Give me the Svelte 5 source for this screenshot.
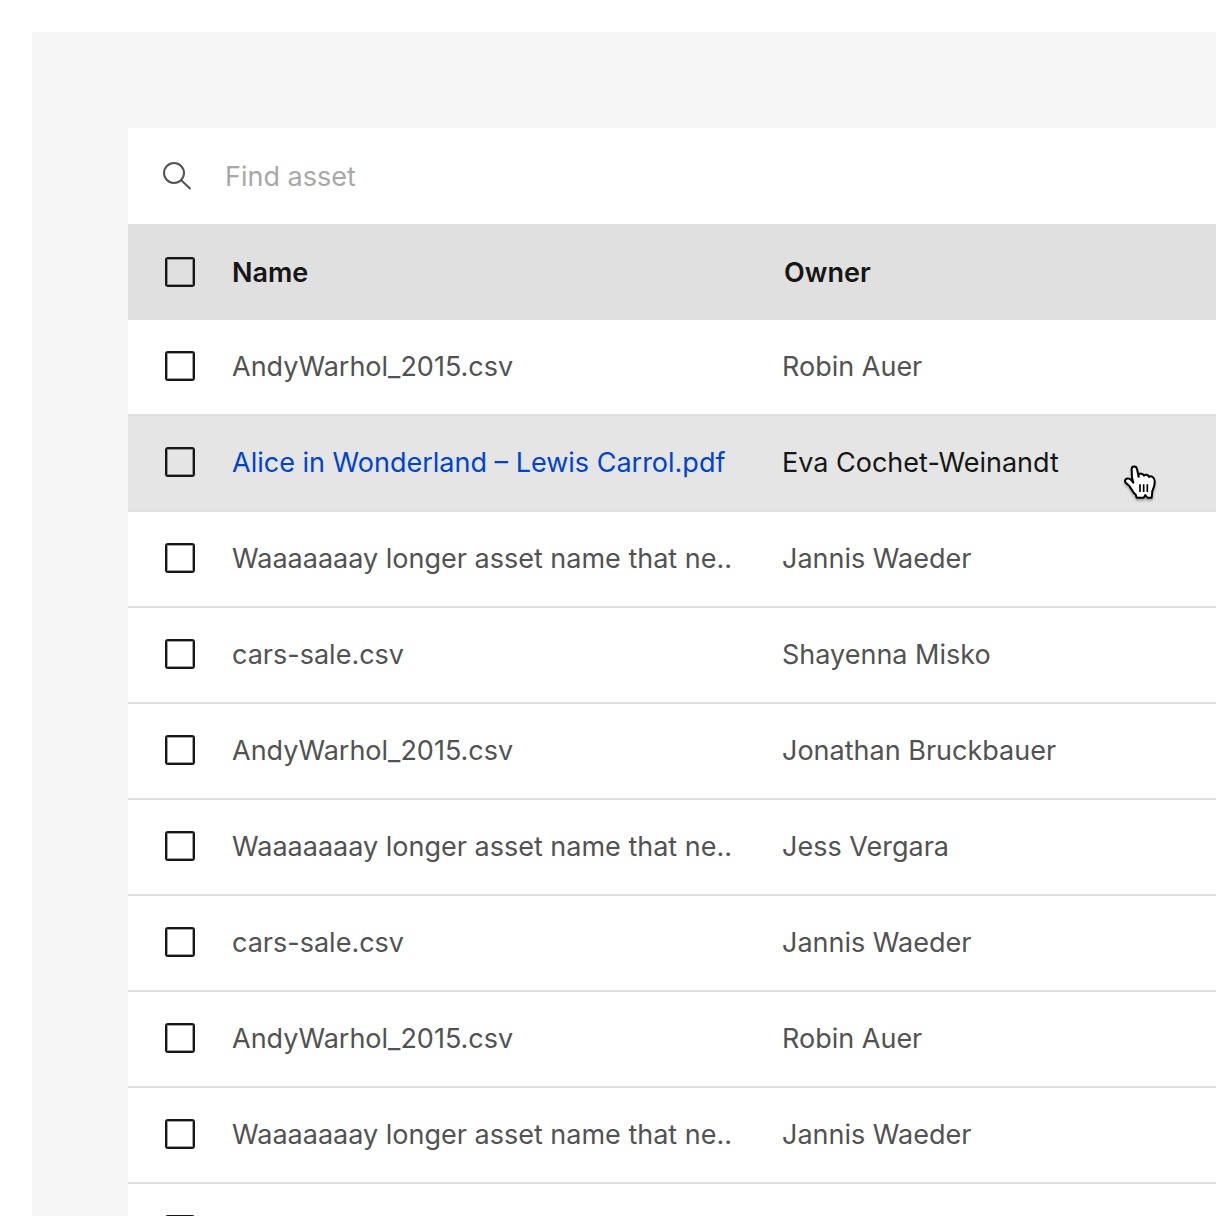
<script>
  const rows = $state([
    { name: 'AndyWarhol_2015.csv', owner: 'Robin Auer', checked: false },
    { name: 'Alice in Wonderland – Lewis Carrol.pdf', owner: 'Eva Cochet-Weinandt', checked: false, active: true },
    { name: 'Waaaaaaay longer asset name that ne..', owner: 'Jannis Waeder', checked: false },
    { name: 'cars-sale.csv', owner: 'Shayenna Misko', checked: false },
    { name: 'AndyWarhol_2015.csv', owner: 'Jonathan Bruckbauer', checked: false },
    { name: 'Waaaaaaay longer asset name that ne..', owner: 'Jess Vergara', checked: false },
    { name: 'cars-sale.csv', owner: 'Jannis Waeder', checked: false },
    { name: 'AndyWarhol_2015.csv', owner: 'Robin Auer', checked: false },
    { name: 'Waaaaaaay longer asset name that ne..', owner: 'Jannis Waeder', checked: false },
    { name: 'cars-sale.csv', owner: 'Shayenna Misko', checked: false }
  ]);

  const allChecked = $derived(rows.every((row) => row.checked));

  function toggleAll(event) {
    for (const row of rows) row.checked = event.currentTarget.checked;
  }
</script>

<main class="page">
  <section class="panel">
    <label class="search">
      <svg class="search-icon" viewBox="0 0 32 32" aria-hidden="true">
        <circle cx="13" cy="13" r="10" />
        <path d="M20 20L29.5 29" />
      </svg>
      <input class="search-input" type="search" placeholder="Find asset" aria-label="Find asset" />
    </label>

    <table class="assets">
      <colgroup>
        <col class="col-select" />
        <col class="col-name" />
        <col />
      </colgroup>
      <thead>
        <tr>
          <th class="select" scope="col">
            <input type="checkbox" aria-label="Select all assets" checked={allChecked} onchange={toggleAll} />
          </th>
          <th class="label" scope="col">Name</th>
          <th class="label" scope="col">Owner</th>
        </tr>
      </thead>
      <tbody>
        {#each rows as row}
          <tr class:active={row.active}>
            <td class="select">
              <input type="checkbox" aria-label="Select {row.name}" bind:checked={row.checked} />
            </td>
            <td>
              {#if row.active}
                <a href="#asset">{row.name}</a>
              {:else}
                {row.name}
              {/if}
            </td>
            <td class="owner">
              {row.owner}
              {#if row.active}
                <svg class="pointer" viewBox="60 60 120 120" aria-hidden="true">
                  <path
                    d="M93 112L92 89C91 77 106 76 108 87L113 110L113 104C116 99 126 100 129 107C133 102 142 104 144 111C150 106 161 112 161 123C162 137 158 144 154 153L152 173L139 173L133 165L128 173L107 173L104 164C94 157 91 146 86 139L75 129C68 121 76 113 84 116C90 118 94 124 97 128Z"
                  />
                  <path class="folds" d="M117 133V156M128 133V156M139 133V156" />
                </svg>
              {/if}
            </td>
          </tr>
        {/each}
      </tbody>
    </table>
  </section>
</main>

<style>
  :global(body) {
    height: 100vh;
    overflow: hidden;
    background: #fff;
  }

  .page {
    box-sizing: border-box;
    min-height: 100vh;
    padding: 96px 0 0 96px;
    border: solid #fff;
    border-width: 32px 0 0 32px;
    background: #f6f6f6;
    font-family: Inter, "Liberation Sans", sans-serif;
    font-size: 27px;
    line-height: 36px;
    color: #525252;
  }

  .panel {
    background: #fff;
  }

  .search {
    display: flex;
    align-items: center;
    gap: 32px;
    height: 96px;
    padding-left: 33px;
  }

  .search-icon {
    flex: none;
    width: 32px;
    height: 32px;
    fill: none;
    stroke: #525252;
    stroke-width: 2;
  }

  .search-input {
    flex: 1;
    min-width: 0;
    padding: 2px 0 0;
    border: 0;
    outline: 0;
    background: transparent;
    font: inherit;
    color: #161616;
    appearance: none;
  }

  .search-input::placeholder {
    color: #a8a8a8;
    opacity: 1;
  }

  .assets {
    width: 100%;
    table-layout: fixed;
    border-collapse: separate;
    border-spacing: 0;
  }

  .col-select {
    width: 104px;
  }

  .col-name {
    width: 550px;
  }

  th,
  td {
    box-sizing: border-box;
    height: 96px;
    padding: 0;
    text-align: left;
    vertical-align: middle;
    white-space: nowrap;
  }

  th {
    background: #e0e0e0;
    font-weight: 600;
    color: #161616;
  }

  .label {
    padding-top: 2px;
  }

  .label:last-child {
    padding-left: 2px;
  }

  td {
    border-bottom: 2px solid #e0e0e0;
  }

  .select {
    padding-left: 37px;
  }

  td.select {
    padding-bottom: 2px;
  }

  .select input {
    display: block;
    box-sizing: border-box;
    width: 30px;
    height: 30px;
    margin: 0;
    border: 2px solid #161616;
    border-radius: 3px;
    box-shadow: inset 0 0 0 1px rgb(22 22 22 / 40%);
    appearance: none;
  }

  .select input:checked {
    background: #161616;
    box-shadow: inset 0 0 0 4px #fff;
  }

  .active td {
    background: #e5e5e5;
    color: #161616;
  }

  .active a {
    color: #0043ce;
    text-decoration: none;
  }

  .owner {
    position: relative;
  }

  .pointer {
    position: absolute;
    top: 44px;
    left: 339px;
    width: 40px;
    height: 40px;
    fill: #fff;
    stroke: #000;
    stroke-width: 6;
    stroke-linejoin: round;
    filter: drop-shadow(0 2px 1px rgb(0 0 0 / 30%));
  }

  .folds {
    fill: none;
    stroke-width: 5;
  }
</style>
